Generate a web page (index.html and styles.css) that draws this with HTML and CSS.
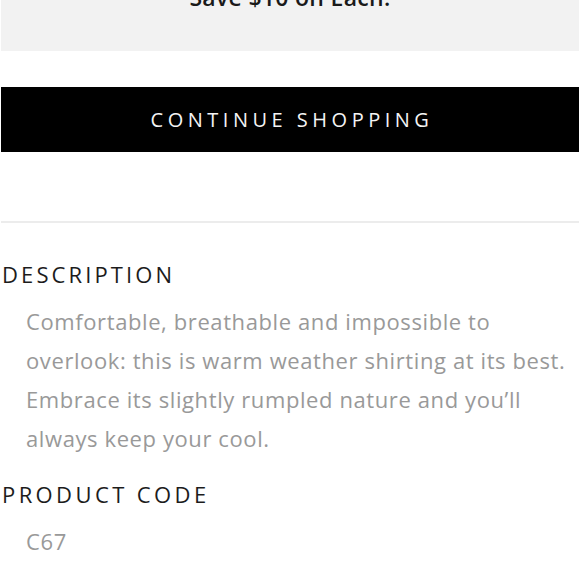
FILE: index.html
```html
<!DOCTYPE html>
<html>
<head>
<meta charset="utf-8">
<link rel="stylesheet" href="styles.css">
</head>
<body>
<div class="page">
  <div class="promo"><p class="promo-text">Save $10 on Each.</p></div>
  <button class="continue">CONTINUE SHOPPING</button>
  <hr class="divider">
  <section class="section">
    <h2 class="heading">DESCRIPTION</h2>
    <p class="body">Comfortable, breathable and impossible to overlook: this is warm weather shirting at its best. Embrace its slightly rumpled nature and you’ll always keep your cool.</p>
  </section>
  <section class="section">
    <h2 class="heading">PRODUCT CODE</h2>
    <p class="body">C67</p>
  </section>
</div>
</body>
</html>
```
FILE: styles.css
```css
html, body {
  margin: 0;
  padding: 0;
  background: #fff;
}
body {
  font-family: "Open Sans", "Noto Sans", sans-serif;
  overflow: hidden;
}
.page {
  width: 580px;
  padding: 0 1px;
  box-sizing: border-box;
}
.promo {
  background: #f2f2f2;
  height: 51px;
  display: flex;
  justify-content: center;
  align-items: flex-start;
  overflow: hidden;
}
.promo-text {
  margin: -16px 0 0;
  font-size: 23px;
  font-weight: 600;
  color: #1a1a1a;
  line-height: 26px;
  letter-spacing: 0.3px;
}
.continue {
  display: block;
  width: 100%;
  height: 65px;
  margin-top: 36px;
  background: #000;
  color: #f4f4f4;
  border: none;
  font-family: "Open Sans", "Noto Sans", sans-serif;
  font-size: 20px;
  letter-spacing: 4.5px;
  padding: 0 0 0 4px;
}
.divider {
  border: none;
  border-top: 2px solid #ececec;
  margin: 69px 0 0;
}
.section {
  margin: 0;
}
.heading {
  margin: 0;
  font-size: 22px;
  font-weight: 400;
  letter-spacing: 3.1px;
  color: #1c1c1c;
  line-height: 26px;
  padding-left: 1px;
}
.section + .section .heading {
  letter-spacing: 3.4px;
}
.section:first-of-type .heading {
  margin-top: 38px;
}
.body {
  margin: 15px 0 0;
  padding-left: 25px;
  padding-right: 5px;
  font-size: 22px;
  letter-spacing: 0.6px;
  line-height: 39px;
  color: #999;
}
.section + .section .heading {
  margin-top: 23px;
}
.section + .section .body {
  margin-top: 15px;
}
```
